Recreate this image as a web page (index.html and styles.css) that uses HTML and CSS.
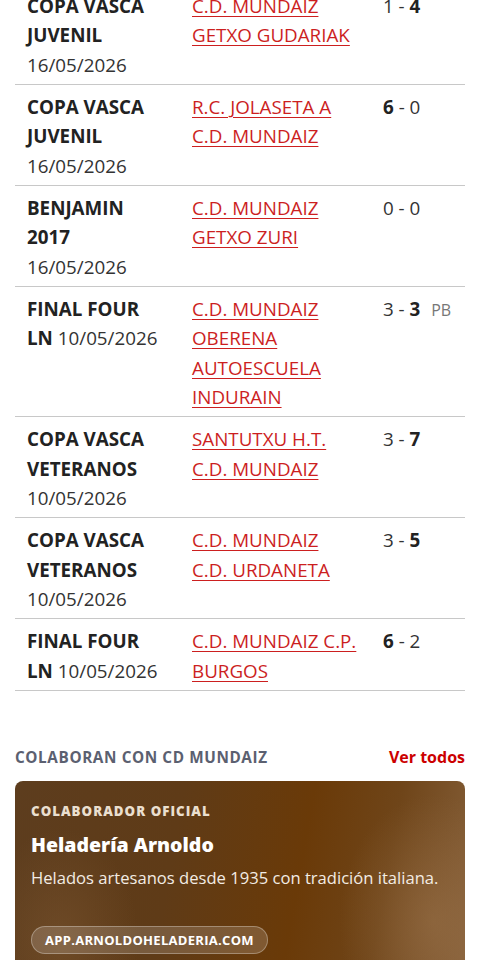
FILE: index.html
```html
<!DOCTYPE html>
<html lang="es">
<head>
<meta charset="utf-8">
<title>Resultados CD Mundaiz</title>
<link rel="stylesheet" href="styles.css">
</head>
<body>
<main class="page">
  <table class="results">
    <tbody>
      <tr>
        <td class="comp"><strong>COPA VASCA JUVENIL</strong> 16/05/2026</td>
        <td class="teams"><a href="#">C.D. MUNDAIZ</a><br><a href="#">GETXO GUDARIAK</a></td>
        <td class="score">1 - <strong>4</strong></td>
      </tr>
      <tr>
        <td class="comp"><strong>COPA VASCA JUVENIL</strong> 16/05/2026</td>
        <td class="teams"><a href="#">R.C. JOLASETA A</a><br><a href="#">C.D. MUNDAIZ</a></td>
        <td class="score"><strong>6</strong> - 0</td>
      </tr>
      <tr>
        <td class="comp"><strong>BENJAMIN 2017</strong> 16/05/2026</td>
        <td class="teams"><a href="#">C.D. MUNDAIZ</a><br><a href="#">GETXO ZURI</a></td>
        <td class="score">0 - 0</td>
      </tr>
      <tr>
        <td class="comp"><strong>FINAL FOUR LN</strong> 10/05/2026</td>
        <td class="teams"><a href="#">C.D. MUNDAIZ</a><br><a href="#">OBERENA AUTOESCUELA INDURAIN</a></td>
        <td class="score">3 - <strong>3</strong> <span class="pb">PB</span></td>
      </tr>
      <tr>
        <td class="comp"><strong>COPA VASCA VETERANOS</strong> 10/05/2026</td>
        <td class="teams"><a href="#">SANTUTXU H.T.</a><br><a href="#">C.D. MUNDAIZ</a></td>
        <td class="score">3 - <strong>7</strong></td>
      </tr>
      <tr>
        <td class="comp"><strong>COPA VASCA VETERANOS</strong> 10/05/2026</td>
        <td class="teams"><a href="#">C.D. MUNDAIZ</a><br><a href="#">C.D. URDANETA</a></td>
        <td class="score">3 - <strong>5</strong></td>
      </tr>
      <tr>
        <td class="comp"><strong>FINAL FOUR LN</strong> 10/05/2026</td>
        <td class="teams"><a href="#">C.D. MUNDAIZ C.P. BURGOS</a></td>
        <td class="score"><strong>6</strong> - 2</td>
      </tr>
    </tbody>
  </table>

  <section class="sponsors">
    <div class="sponsors-head">
      <h2 class="sponsors-title">COLABORAN CON CD MUNDAIZ</h2>
      <a class="see-all" href="#">Ver todos</a>
    </div>
    <article class="sponsor-card">
      <p class="sponsor-kicker">COLABORADOR OFICIAL</p>
      <h3 class="sponsor-name">Heladería Arnoldo</h3>
      <p class="sponsor-desc">Helados artesanos desde 1935 con tradición italiana.</p>
      <a class="sponsor-link" href="#">APP.ARNOLDOHELADERIA.COM</a>
    </article>
  </section>
</main>
</body>
</html>
```
FILE: styles.css
```css
* { box-sizing: border-box; }
html, body { margin: 0; padding: 0; background: #fff; }
body {
  font-family: "Open Sans", "Noto Sans", sans-serif;
  color: #333;
  overflow: hidden;
}
.page {
  padding: 0 15px;
  margin-top: -16.5px;
}
.results {
  width: 100%;
  border-collapse: collapse;
  font-size: 18.8px;
  line-height: 29.5px;
}
.results tr { border-bottom: 1px solid #c8c8c8; }
.results td {
  vertical-align: top;
  padding: 8px 12px 3.5px;
}
.results .comp { width: 165px; color: #333; }
.results .comp strong { color: #222; font-weight: 700; }
.results .teams { width: 191px; }
.results .teams a { color: #cc1f1f; text-decoration: underline; text-underline-offset: 3px; text-decoration-thickness: 1px; }
.results .score { color: #333; white-space: nowrap; }
.results .score strong { color: #222; }
.results .pb { font-size: 16px; color: #777; margin-left: 6px; }

.sponsors { margin-top: 55px; }
.sponsors-head {
  display: flex;
  justify-content: space-between;
  align-items: center;
  margin-bottom: 13px;
}
.sponsors-title {
  margin: 0;
  font-size: 15.3px;
  font-weight: 700;
  letter-spacing: 0.6px;
  color: #5b6070;
}
.see-all {
  color: #cc0000;
  font-weight: 700;
  font-size: 16px;
  text-decoration: none;
}
.sponsor-card {
  border-radius: 8px;
  padding: 20px 16px 16px;
  color: #fff;
  background:
    radial-gradient(ellipse 30% 90% at 93% 70%, rgba(160,120,80,0.45), rgba(160,120,80,0) 70%),
    radial-gradient(ellipse 25% 80% at 10% 80%, rgba(140,100,60,0.35), rgba(140,100,60,0) 70%),
    linear-gradient(100deg, #5d3d1e 0%, #5f3b17 35%, #6a3a08 62%, #6f4519 80%, #86603a 100%);
  height: 200px;
}
.sponsor-kicker {
  margin: 0;
  font-size: 13.3px;
  font-weight: 800;
  letter-spacing: 1px;
  color: #eadfcf;
  line-height: 20px;
}
.sponsor-name {
  margin: 12px 0 0;
  font-size: 19.5px;
  font-weight: 800;
  line-height: 24px;
}
.sponsor-desc {
  margin: 10px 0 0;
  font-size: 16.6px;
  line-height: 22px;
  color: #f3ece4;
}
.sponsor-link {
  display: inline-block;
  margin-top: 37px;
  padding: 4px 13px;
  border-radius: 999px;
  background: rgba(255,255,255,0.16);
  border: 1px solid rgba(255,255,255,0.3);
  color: #fff;
  font-size: 13px;
  font-weight: 700;
  letter-spacing: 0.3px;
  text-decoration: none;
  line-height: 18px;
}
```
